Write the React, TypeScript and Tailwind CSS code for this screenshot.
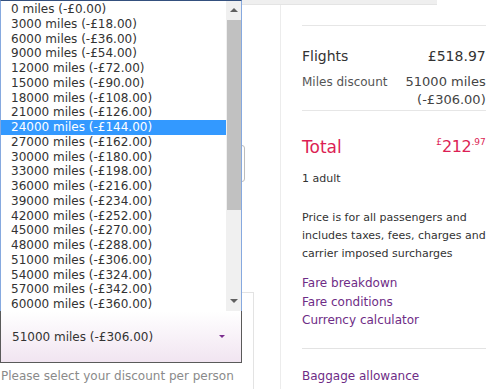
const options = [
  '0 miles (-£0.00)',
  '3000 miles (-£18.00)',
  '6000 miles (-£36.00)',
  '9000 miles (-£54.00)',
  '12000 miles (-£72.00)',
  '15000 miles (-£90.00)',
  '18000 miles (-£108.00)',
  '21000 miles (-£126.00)',
  '24000 miles (-£144.00)',
  '27000 miles (-£162.00)',
  '30000 miles (-£180.00)',
  '33000 miles (-£198.00)',
  '36000 miles (-£216.00)',
  '39000 miles (-£234.00)',
  '42000 miles (-£252.00)',
  '45000 miles (-£270.00)',
  '48000 miles (-£288.00)',
  '51000 miles (-£306.00)',
  '54000 miles (-£324.00)',
  '57000 miles (-£342.00)',
  '60000 miles (-£360.00)',
]

export default function App() {
  return (
    <div className="relative w-[500px] h-[389px] overflow-hidden bg-white text-[#333] font-['DejaVu_Sans',sans-serif]">
      {/* strip of the page above */}
      <div className="h-[5px] w-[437px] bg-[#efefef] border-b border-[#e4e4e4]" />

      <div className="flex">
        {/* Left column */}
        <div className="w-[280px] shrink-0">
          <div className="mt-[140px] h-[37px] w-[245px] border border-[#bdbdbd] rounded-[3px]" />
          <div className="mt-[110px] w-[254px] h-[120px] border-t border-r border-[#e3e3e3] pt-[17px]">
            <div className="h-[53px] w-[242px] border border-[#5a5a5a] bg-gradient-to-b from-white to-[#f1e5f1] flex items-center justify-between pl-[11px] pr-[16px] text-[12px]">
              <span>51000 miles (-£306.00)</span>
              <span className="w-0 h-0 border-l-[3px] border-r-[3px] border-t-[3px] border-l-transparent border-r-transparent border-t-[#7b2d8e]" />
            </div>
            <div className="mt-[5px] leading-[16px] text-[12px] text-[#8a8a8a] pl-px whitespace-nowrap">
              Please select your discount per person
            </div>
          </div>
        </div>

        {/* Summary card */}
        <div className="flex-1 border-l border-[#ececec] pl-[21px] pr-[15px] h-[384px]">
          <div className="mt-[20px] border-t border-[#e6e6e6]" />
          <div className="mt-[20px] flex justify-between text-[14px] leading-[20px]">
            <span>Flights</span>
            <span>£518.97</span>
          </div>
          <div className="mt-[7px] flex justify-between text-[12px] leading-[18px]">
            <span className="text-[#555]">Miles discount</span>
            <span className="text-right text-[13px] text-[#444]">
              51000 miles
              <br />
              (-£306.00)
            </span>
          </div>
          <div className="mt-px border-t border-[#e6e6e6]" />
          <div className="mt-[24px] flex justify-between items-start text-[#dc1f55] leading-[24px]">
            <span className="text-[17px]">Total</span>
            <span className="flex items-start">
              <span className="text-[9px] leading-[12px] mt-[1px]">£</span>
              <span className="text-[16px] tracking-tight">212</span>
              <span className="text-[9px] leading-[12px] mt-[1px]">.97</span>
            </span>
          </div>
          <div className="mt-[12px] text-[11px] leading-[16px]">1 adult</div>
          <p className="mt-[22px] text-[11px] leading-[18px] whitespace-nowrap">
            Price is for all passengers and
            <br />
            includes taxes, fees, charges and
            <br />
            carrier imposed surcharges
          </p>
          <div className="mt-[11px] flex flex-col text-[12px] leading-[18.5px] text-[#6e2c86]">
            <span>Fare breakdown</span>
            <span>Fare conditions</span>
            <span>Currency calculator</span>
          </div>
          <div className="mt-[18px] border-t border-[#e3e3e3]" />
          <div className="mt-[18px] text-[12px] leading-[18px] text-[#6e2c86]">Baggage allowance</div>
        </div>
      </div>

      {/* Open dropdown list */}
      <div className="absolute left-0 top-0 w-[242px] h-[311px] bg-white border-x border-t border-x-[#86a9df] border-t-[#34507e] flex overflow-hidden">
        <div className="flex-1 pt-[1px] text-[12px]">
          {options.map((o, i) => (
            <div
              key={o}
              className={
                i === 8
                  ? 'h-[14.75px] leading-[14.75px] pl-[10px] bg-[#3399ff] text-white whitespace-nowrap'
                  : 'h-[14.75px] leading-[14.75px] pl-[10px] text-[#333] whitespace-nowrap'
              }
            >
              {o}
            </div>
          ))}
        </div>
        <div className="w-[15px] bg-[#f0f0f0] flex flex-col items-center">
          <div className="h-[17px] flex items-center justify-center">
            <span className="w-0 h-0 border-l-[4px] border-r-[4px] border-b-[4px] border-l-transparent border-r-transparent border-b-[#606060]" />
          </div>
          <div className="mt-[2px] w-[14px] h-[190px] bg-[#c1c1c1]" />
          <div className="flex-1" />
          <div className="h-[17px] flex items-center justify-center mb-[2px]">
            <span className="w-0 h-0 border-l-[4px] border-r-[4px] border-t-[4px] border-l-transparent border-r-transparent border-t-[#606060]" />
          </div>
        </div>
      </div>
    </div>
  )
}
